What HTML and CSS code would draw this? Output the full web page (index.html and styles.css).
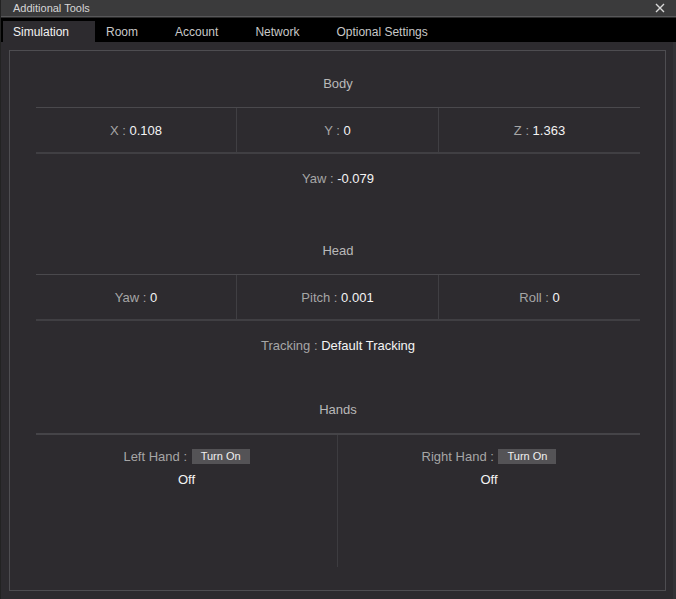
FILE: index.html
```html
<!DOCTYPE html>
<html>
<head>
<meta charset="utf-8">
<link rel="stylesheet" href="styles.css">
</head>
<body>
<div class="window">
  <div class="titlebar">
    <span class="title">Additional Tools</span>
    <svg class="close" width="10" height="10" viewBox="0 0 10 10"><path d="M1 1 L9 9 M9 1 L1 9" stroke="#d8d8d8" stroke-width="1.4"/></svg>
  </div>
  <div class="tabbar">
    <div class="tab active">Simulation</div>
    <div class="tab first">Room</div>
    <div class="tab">Account</div>
    <div class="tab">Network</div>
    <div class="tab">Optional Settings</div>
  </div>
  <div class="content">
    <div class="panel">
      <div class="section body-sec">
        <div class="header">Body</div>
        <div class="grid">
          <div class="cell"><span class="lbl">X : </span><span class="val">0.108</span></div>
          <div class="cell"><span class="lbl">Y : </span><span class="val">0</span></div>
          <div class="cell"><span class="lbl">Z : </span><span class="val">1.363</span></div>
        </div>
        <div class="footer"><span class="lbl">Yaw : </span><span class="val">-0.079</span></div>
      </div>
      <div class="section head-sec">
        <div class="header">Head</div>
        <div class="grid">
          <div class="cell"><span class="lbl">Yaw : </span><span class="val">0</span></div>
          <div class="cell"><span class="lbl">Pitch : </span><span class="val">0.001</span></div>
          <div class="cell"><span class="lbl">Roll : </span><span class="val">0</span></div>
        </div>
        <div class="footer"><span class="lbl">Tracking : </span><span class="val">Default Tracking</span></div>
      </div>
      <div class="section hands-sec">
        <div class="header">Hands</div>
        <div class="hands">
          <div class="hand">
            <div class="hand-row"><span class="lbl">Left Hand : </span><span class="btn">Turn On</span></div>
            <div class="state">Off</div>
          </div>
          <div class="hand right">
            <div class="hand-row"><span class="lbl">Right Hand : </span><span class="btn">Turn On</span></div>
            <div class="state">Off</div>
          </div>
        </div>
      </div>
    </div>
  </div>
</div>
</body>
</html>
```

FILE: styles.css
```css
html, body {
  margin: 0;
  padding: 0;
  background: #2d2b2f;
}
body {
  font-family: "Liberation Sans", Arial, sans-serif;
  width: 676px;
  height: 599px;
  overflow: hidden;
}
.window {
  width: 676px;
  height: 599px;
  display: flex;
  flex-direction: column;
  background: #2d2b2f;
  border-left: 1px solid #222;
  box-sizing: border-box;
}
.titlebar {
  height: 16px;
  background: #3b3b3c;
  border-bottom: 1px solid #58585a;
  display: flex;
  align-items: center;
  justify-content: space-between;
  padding: 0 11px 0 12px;
  flex: none;
}
.title {
  color: #d6d6d6;
  font-size: 11px;
}
.close {
  display: block;
}
.tabbar {
  height: 25px;
  background: #000;
  border-top: 1px solid #2a2a2a;
  display: flex;
  align-items: flex-end;
  padding-left: 2px;
  flex: none;
  box-sizing: border-box;
}
.tab {
  font-size: 12px;
  color: #c8c8c8;
  height: 21px;
  line-height: 23px;
  padding: 0 18.5px;
}
.tab.first {
  padding-left: 11px;
}
.tab.active {
  background: #2d2b2f;
  color: #f2f2f2;
  width: 92px;
  padding: 0 0 0 10px;
  box-sizing: border-box;
}
.content {
  flex: 1;
  padding: 8px 7px 8px 8px;
  border-right: 3px solid #333236;
  box-sizing: border-box;
  display: flex;
}
.panel {
  flex: 1;
  border: 1px solid #4e4d51;
  padding: 8px 25px 0 26px;
  display: flex;
  flex-direction: column;
}
.header {
  height: 48px;
  display: flex;
  align-items: center;
  justify-content: center;
  font-size: 13px;
  color: #b9b9b9;
}
.grid {
  display: grid;
  grid-template-columns: 200px 202px 202px;
  border-top: 1px solid #4a494d;
  border-bottom: 2px solid #403f43;
  height: 47px;
  box-sizing: border-box;
}
.cell {
  display: flex;
  align-items: center;
  justify-content: center;
  font-size: 13px;
}
.cell + .cell {
  border-left: 1px solid #403f43;
}
.footer {
  height: 48px;
  display: flex;
  align-items: center;
  justify-content: center;
  font-size: 13px;
}
.lbl {
  color: #a6a6a6;
  white-space: pre;
}
.val {
  color: #f4f4f4;
}
.body-sec {
  margin-bottom: 24px;
}
.head-sec {
  margin-bottom: 16px;
}
.hands {
  display: grid;
  grid-template-columns: 301px 303px;
  border-top: 2px solid #454448;
  height: 134px;
  box-sizing: border-box;
}
.hand {
  display: flex;
  flex-direction: column;
  align-items: center;
  padding-top: 14px;
  font-size: 13px;
}
.hand.right {
  border-left: 1px solid #3d3c40;
}
.hand-row {
  display: flex;
  align-items: center;
  height: 15px;
}
.btn {
  background: #545356;
  color: #f0f0f0;
  font-size: 11px;
  height: 15px;
  line-height: 15px;
  padding: 0 9px;
  margin-left: 1px;
}
.state {
  color: #f4f4f4;
  margin-top: 8px;
  line-height: 16px;
}
```
